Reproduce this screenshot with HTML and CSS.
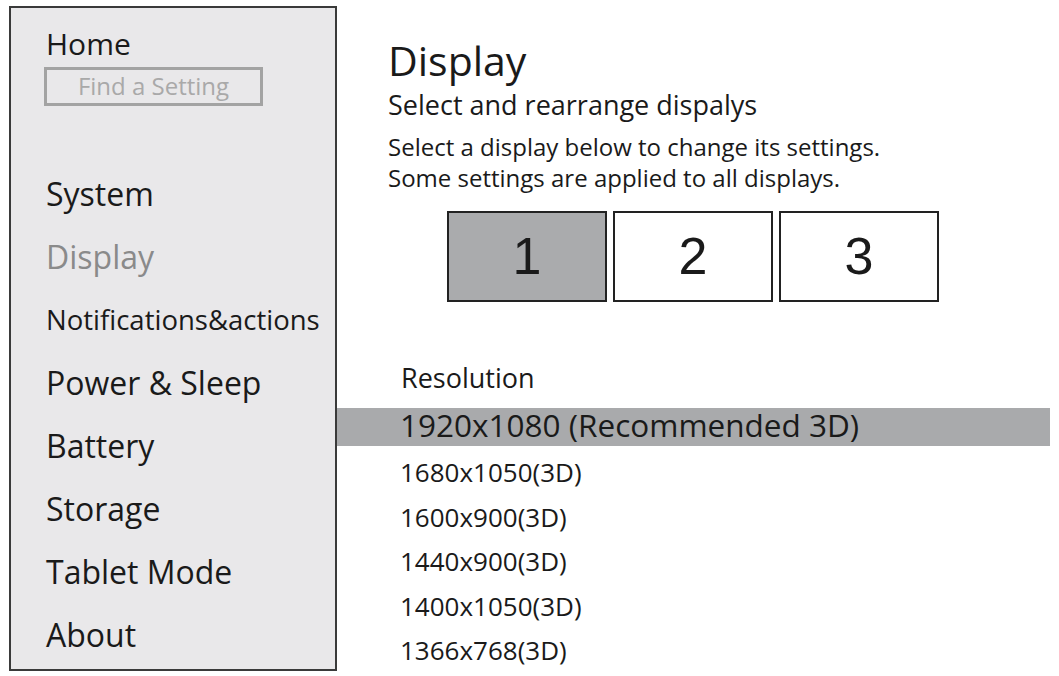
FILE: index.html
```html
<!DOCTYPE html>
<html lang="en">
<head>
    <meta charset="UTF-8">
    <meta name="viewport" content="width=device-width, initial-scale=1.0">
    <title>Display Settings</title>
    <link rel="stylesheet" href="styles.css">
</head>
<body>
    <nav class="sidebar">
        <div class="home">Home</div>
        <div class="search-box">Find a Setting</div>
        <ul class="nav-list">
            <li class="nav-item">System</li>
            <li class="nav-item nav-active">Display</li>
            <li class="nav-item nav-small">Notifications&amp;actions</li>
            <li class="nav-item">Power &amp; Sleep</li>
            <li class="nav-item">Battery</li>
            <li class="nav-item">Storage</li>
            <li class="nav-item">Tablet Mode</li>
            <li class="nav-item">About</li>
        </ul>
    </nav>

    <main class="content">
        <h1 class="page-title">Display</h1>
        <h2 class="subtitle">Select and rearrange dispalys</h2>
        <p class="description">Select a display below to change its settings.<br>Some settings are applied to all displays.</p>

        <section class="monitors">
            <div class="monitor monitor-selected">1</div>
            <div class="monitor">2</div>
            <div class="monitor">3</div>
        </section>

        <div class="res-label">Resolution</div>
        <ul class="res-list">
            <li class="res-item res-selected">1920x1080 (Recommended 3D)</li>
            <li class="res-item">1680x1050(3D)</li>
            <li class="res-item">1600x900(3D)</li>
            <li class="res-item">1440x900(3D)</li>
            <li class="res-item">1400x1050(3D)</li>
            <li class="res-item">1366x768(3D)</li>
        </ul>
    </main>
</body>
</html>
```

FILE: styles.css
```css
body {
    margin: 0;
    background-color: #ffffff;
    color: #1a1a1a;
    font-family: "Open Sans", "Noto Sans", sans-serif;
    display: flex;
    overflow: hidden;
}

.sidebar {
    width: 328px;
    height: 665px;
    margin: 6px 0 0 9px;
    box-sizing: border-box;
    border: 2px solid #3a3a3a;
    background-color: #e9e8ea;
    padding: 18px 0 0 35px;
    flex-shrink: 0;
}

.home {
    font-size: 30px;
    line-height: 36px;
}

.search-box {
    width: 219px;
    height: 39px;
    margin: 5px 0 0 -2px;
    box-sizing: border-box;
    border: 3px solid #a3a3a3;
    color: #a9a9a9;
    font-size: 24px;
    line-height: 31px;
    text-align: center;
}

.nav-list {
    list-style: none;
    margin: 56px 0 0 0;
    padding: 0;
}

.nav-item {
    font-size: 32px;
    height: 63px;
    line-height: 63px;
    white-space: nowrap;
}

.nav-active {
    color: #8a8a8a;
}

.nav-small {
    font-size: 27.5px;
}

.content {
    flex: 1;
    margin-right: 9px;
    padding-top: 36px;
}

.page-title {
    margin: 0 0 0 51px;
    font-size: 41px;
    font-weight: normal;
    line-height: 48px;
}

.subtitle {
    margin: 5px 0 0 51px;
    font-size: 27px;
    font-weight: normal;
    line-height: 32px;
}

.description {
    margin: 10px 0 0 51px;
    font-size: 24px;
    line-height: 31px;
}

.monitors {
    display: flex;
    gap: 6px;
    margin: 18px 0 0 110px;
}

.monitor {
    width: 160px;
    height: 91px;
    box-sizing: border-box;
    border: 2px solid #222222;
    background-color: #ffffff;
    font-family: "Liberation Sans", Arial, sans-serif;
    font-size: 52px;
    line-height: 87px;
    text-align: center;
}

.monitor-selected {
    background-color: #aaabad;
}

.res-label {
    margin: 60px 0 0 64px;
    font-size: 27px;
    line-height: 32px;
}

.res-list {
    list-style: none;
    margin: 14px 0 0 0;
    padding: 0;
}

.res-item {
    padding-left: 63px;
    font-size: 26px;
    line-height: 44.5px;
}

.res-selected {
    background-color: #a9aaac;
    font-size: 31.5px;
    line-height: 34px;
    padding-bottom: 4px;
    margin-bottom: 4px;
}
```
